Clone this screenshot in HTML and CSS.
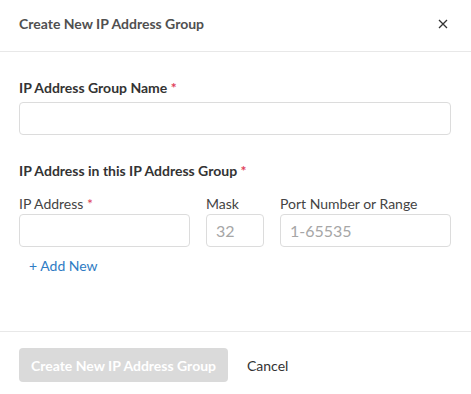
FILE: index.html
```html
<!DOCTYPE html>
<html lang="en">
<head>
    <meta charset="UTF-8">
    <meta name="viewport" content="width=device-width, initial-scale=1.0">
    <title>Create New IP Address Group</title>
    <link rel="stylesheet" href="styles.css">
</head>
<body>

    <div class="modal">
        <!-- Header -->
        <div class="modal-header">
            <h3>Create New IP Address Group</h3>
            <button class="close-btn" aria-label="Close">
                <svg width="10" height="10" viewBox="0 0 10 10">
                    <path d="M1 1 L9 9 M9 1 L1 9" stroke="#333" stroke-width="1.3" fill="none"/>
                </svg>
            </button>
        </div>

        <!-- Body -->
        <div class="modal-body">
            <div class="field">
                <label class="label">IP Address Group Name <span class="req">*</span></label>
                <input type="text" class="input">
            </div>

            <div class="section">
                <div class="label">IP Address in this IP Address Group <span class="req">*</span></div>
                <div class="ip-row">
                    <div class="col">
                        <label class="sub-label">IP Address <span class="req">*</span></label>
                        <input type="text" class="input">
                    </div>
                    <div class="col">
                        <label class="sub-label">Mask</label>
                        <input type="text" class="input" placeholder="32">
                    </div>
                    <div class="col">
                        <label class="sub-label">Port Number or Range</label>
                        <input type="text" class="input" placeholder="1-65535">
                    </div>
                </div>
                <a href="#" class="add-new">+ Add New</a>
            </div>
        </div>

        <!-- Footer -->
        <div class="modal-footer">
            <button class="btn-primary" disabled>Create New IP Address Group</button>
            <button class="btn-link">Cancel</button>
        </div>
    </div>

</body>
</html>
```

FILE: styles.css
```css
body {
    margin: 0;
    padding: 0;
    background: #fff;
    font-family: 'Lato', 'Noto Sans', sans-serif;
    color: #333;
}

.modal {
    width: 471px;
    height: 394px;
    display: flex;
    flex-direction: column;
}

/* Header */
.modal-header {
    height: 52px;
    box-sizing: border-box;
    border-bottom: 1px solid #e8e8e8;
    display: flex;
    align-items: center;
    justify-content: space-between;
    padding: 0 17px 4px 19px;
}

.modal-header h3 {
    margin: 0;
    font-size: 14px;
    font-weight: 700;
    color: #505050;
}

.close-btn {
    border: none;
    background: none;
    padding: 0;
    width: 22px;
    height: 22px;
    display: flex;
    align-items: center;
    justify-content: center;
    cursor: pointer;
}

/* Body */
.modal-body {
    flex: 1;
    padding: 26px 20px 0 19px;
}

.label {
    display: block;
    font-size: 14px;
    font-weight: 700;
    line-height: 20px;
    color: #333;
}

.req {
    color: #e0405a;
}

.field .label {
    margin-bottom: 4px;
}

.input {
    display: block;
    width: 100%;
    height: 33px;
    box-sizing: border-box;
    border: 1px solid #dcdcdc;
    border-radius: 4px;
    padding: 0 9px;
    font-family: inherit;
    font-size: 16px;
    color: #333;
    outline: none;
}

.input::placeholder {
    color: #a6a6a6;
}

.section {
    margin-top: 26px;
}

.ip-row {
    display: grid;
    grid-template-columns: 171px 58px 1fr;
    gap: 16px;
    margin-top: 13px;
}

.sub-label {
    display: block;
    font-size: 14px;
    line-height: 20px;
    color: #444;
}

.add-new {
    display: inline-block;
    margin: 9px 0 0 10px;
    font-size: 14px;
    line-height: 20px;
    color: #2f7cc4;
    text-decoration: none;
}

/* Footer */
.modal-footer {
    border-top: 1px solid #e8e8e8;
    padding: 16px 19px 12px;
    display: flex;
    align-items: center;
    gap: 19px;
}

.btn-primary {
    height: 34px;
    width: 209px;
    border: none;
    border-radius: 4px;
    background: #dadada;
    color: #fff;
    font-family: inherit;
    font-size: 14px;
    font-weight: 700;
    padding: 0;
}

.btn-link {
    border: none;
    background: none;
    padding: 0;
    font-family: inherit;
    font-size: 14px;
    color: #333;
    cursor: pointer;
}
```
